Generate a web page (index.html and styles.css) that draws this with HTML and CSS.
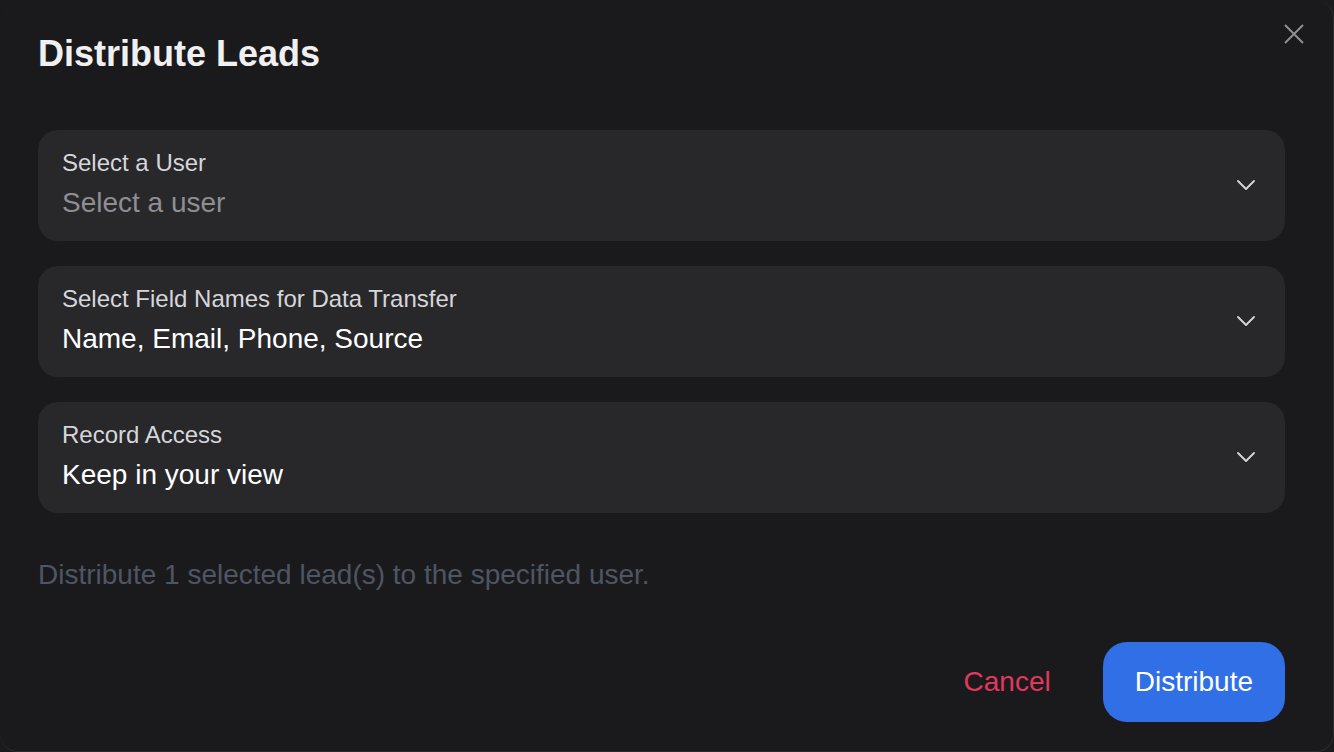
FILE: index.html
```html
<!DOCTYPE html>
<html lang="en">
<head>
<meta charset="utf-8">
<title>Distribute Leads</title>
<link rel="stylesheet" href="styles.css">
</head>
<body>
<div class="modal" role="dialog" aria-labelledby="modal-title">
  <button class="close" aria-label="Close">
    <svg width="20" height="20" viewBox="0 0 20 20" aria-hidden="true">
      <path d="M1 1 L19 19 M19 1 L1 19" />
    </svg>
  </button>

  <h1 id="modal-title" class="title">Distribute Leads</h1>

  <div class="fields">
    <div class="field">
      <div class="field-text">
        <span class="field-label">Select a User</span>
        <span class="field-value placeholder">Select a user</span>
      </div>
      <svg class="chevron" width="18" height="10" viewBox="0 0 18 10" aria-hidden="true">
        <path d="M1 1 L9 9 L17 1" />
      </svg>
    </div>

    <div class="field">
      <div class="field-text">
        <span class="field-label">Select Field Names for Data Transfer</span>
        <span class="field-value">Name, Email, Phone, Source</span>
      </div>
      <svg class="chevron" width="18" height="10" viewBox="0 0 18 10" aria-hidden="true">
        <path d="M1 1 L9 9 L17 1" />
      </svg>
    </div>

    <div class="field">
      <div class="field-text">
        <span class="field-label">Record Access</span>
        <span class="field-value">Keep in your view</span>
      </div>
      <svg class="chevron" width="18" height="10" viewBox="0 0 18 10" aria-hidden="true">
        <path d="M1 1 L9 9 L17 1" />
      </svg>
    </div>
  </div>

  <p class="hint">Distribute 1 selected lead(s) to the specified user.</p>

  <div class="actions">
    <button class="btn btn-cancel">Cancel</button>
    <button class="btn btn-primary">Distribute</button>
  </div>
</div>
</body>
</html>
```

FILE: styles.css
```css
* {
  box-sizing: border-box;
}

html,
body {
  margin: 0;
  height: 100%;
  background: #1a1a1c;
}

body {
  font-family: "Liberation Sans", Arial, Helvetica, sans-serif;
  color: #f2f2f4;
}

.modal {
  position: relative;
  width: 100%;
  height: 100%;
  display: flex;
  flex-direction: column;
  padding: 32px 48px 29px 38px;
  background: #1a1a1c;
  border-style: solid;
  border-color: #2c2c30;
  border-width: 0 1px 1px 0;
  border-radius: 18px;
}

.close {
  position: absolute;
  top: 24px;
  right: 29px;
  width: 20px;
  height: 20px;
  padding: 0;
  border: 0;
  background: none;
  cursor: pointer;
}

.close svg {
  display: block;
  stroke: #8e8e93;
  stroke-width: 2;
  fill: none;
}

.title {
  margin: 0;
  font-size: 36px;
  line-height: 44px;
  font-weight: 700;
  color: #f0f0f2;
}

.fields {
  display: flex;
  flex-direction: column;
  gap: 25px;
  margin-top: 54px;
}

.field {
  display: flex;
  align-items: center;
  justify-content: space-between;
  padding: 19px 30px 20px 24px;
  background: #28282b;
  border-radius: 20px;
}

.field-text {
  display: flex;
  flex-direction: column;
  gap: 8px;
}

.field-label {
  font-size: 24px;
  line-height: 28px;
  color: #d6d6da;
}

.field-value {
  font-size: 28px;
  line-height: 36px;
  color: #ffffff;
}

.field-value.placeholder {
  color: #8e8e93;
}

.chevron {
  display: block;
  fill: none;
  stroke: #d8d8dc;
  stroke-width: 1.8;
  stroke-linecap: round;
  stroke-linejoin: round;
}

.hint {
  margin: 46px 0 0;
  font-size: 28px;
  line-height: 32px;
  color: #4e5563;
}

.actions {
  display: flex;
  justify-content: flex-end;
  align-items: center;
  gap: 20px;
  margin-top: auto;
}

.btn {
  font-family: inherit;
  font-size: 28px;
  line-height: 36px;
  border: 0;
  cursor: pointer;
}

.btn-cancel {
  padding: 22px 32px;
  background: none;
  color: #e0385f;
}

.btn-primary {
  height: 80px;
  padding: 0 32px;
  border-radius: 24px;
  background: #306fe6;
  color: #ffffff;
}
```
